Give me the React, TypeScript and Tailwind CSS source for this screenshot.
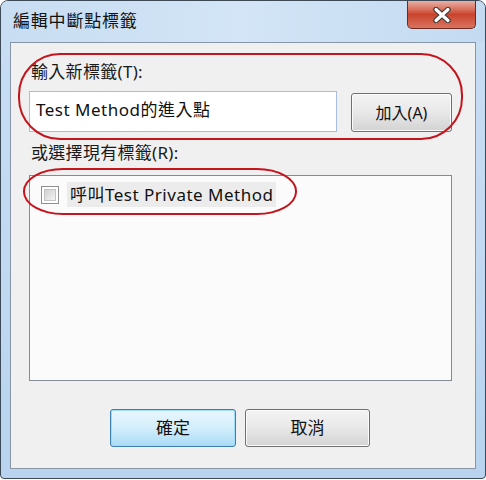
import React from "react";

const FONT = '"Noto Sans", "Open Sans", "Noto Sans CJK TC", sans-serif';

function CloseX() {
  return (
    <svg width="20" height="16" viewBox="0 0 20 16">
      <path d="M4 2.5 L16 13.5 M16 2.5 L4 13.5" stroke="#3b3b3b" strokeWidth="5.5" strokeLinecap="round" />
      <path d="M4 2.5 L16 13.5 M16 2.5 L4 13.5" stroke="#ffffff" strokeWidth="3.2" strokeLinecap="round" />
    </svg>
  );
}

export default function App() {
  return (
    <div className="w-[486px] h-[480px] bg-white" style={{ fontFamily: FONT }}>
      <div className="w-[486px] h-[479px] rounded-t-[8px] rounded-b-[4px] border border-[#3c4a58] bg-gradient-to-b from-[#c9def3] via-[#c2d9f1] to-[#b9d3ee] flex flex-col">
        {/* title bar */}
        <div className="h-[41px] flex items-start justify-between bg-gradient-to-r from-[#c8ddf2] via-[#d3e5f6] to-[#c3daf1] rounded-t-[7px]">
          <div className="pl-[12px] pt-[9px] text-[17px] leading-[22px] tracking-[0.8px] text-[#111]">編輯中斷點標籤</div>
          <div className="mr-[9px] w-[69px] h-[28px] rounded-b-[5px] border border-t-0 border-[#6b2b22] bg-gradient-to-b from-[#e8b0a6] via-[#c9432c] to-[#d9735f] flex items-center justify-center">
            <CloseX />
          </div>
        </div>
        {/* client area */}
        <div className="mx-[9px] h-[427px] border border-[#8796a6] bg-[#f0f0f0] relative flex flex-col px-[18px] pt-[19px]">
          <div className="pl-[2px] text-[17px] leading-[20px] tracking-[0.3px] text-[#1a1a1a]">輸入新標籤(T):</div>
          <div className="mt-[9px] flex items-end gap-[14px]">
            <div className="w-[308px] h-[41px] border border-[#a4bedb] bg-white pl-[6px] pt-[6px] text-[17px] leading-[24px] tracking-[0.5px] text-[#111]">
              Test Method的進入點
            </div>
            <div className="w-[101px] h-[39px] rounded-[3px] border border-[#707070] bg-gradient-to-b from-[#f4f4f4] via-[#e8e8e8] to-[#d3d3d3] flex items-center justify-center text-[16px] text-[#111] shadow-[inset_0_0_0_1px_#fbfbfb]">
              加入(A)
            </div>
          </div>
          <div className="mt-[11px] pl-[2px] text-[17px] leading-[20px] tracking-[0.3px] text-[#1a1a1a]">或選擇現有標籤(R):</div>
          <div className="mt-[12px] w-[423px] h-[206px] border border-[#848b94] bg-[#fbfbfb] pt-[6px] pl-[11px]">
            <div className="flex items-center gap-[8px]">
              <div className="w-[18px] h-[18px] border border-[#8e8f8f] bg-white p-[2px]">
                <div className="w-full h-full border border-[#c4c4c4] bg-gradient-to-br from-[#d0d0d0] to-[#f4f4f4]" />
              </div>
              <div className="bg-[#ececec] px-[3px] h-[25px] flex items-center text-[17px] tracking-[0.5px] text-[#111]">呼叫Test Private Method</div>
            </div>
          </div>
          <div className="mt-[28px] ml-[81px] flex gap-[9px]">
            <div className="w-[126px] h-[38px] rounded-[3px] border border-[#3c7fb1] bg-gradient-to-b from-[#eaf6fd] via-[#d3eefb] to-[#a9dbf6] shadow-[inset_0_0_0_1px_#9fdcfb] flex items-center justify-center text-[17px] text-[#111]">
              確定
            </div>
            <div className="w-[125px] h-[38px] rounded-[3px] border border-[#707070] bg-gradient-to-b from-[#f4f4f4] via-[#e8e8e8] to-[#d3d3d3] shadow-[inset_0_0_0_1px_#fbfbfb] flex items-center justify-center text-[17px] text-[#111]">
              取消
            </div>
          </div>
          {/* red annotation outlines */}
          <div className="absolute left-[7px] top-[10px] w-[445px] h-[87px] rounded-[42px] border-[2.5px] border-[#c4141c] pointer-events-none" />
          <div className="absolute left-[12px] top-[125px] w-[274px] h-[47px] rounded-[40px/23px] border-[2.5px] border-[#c4141c] pointer-events-none" />
        </div>
      </div>
    </div>
  );
}
